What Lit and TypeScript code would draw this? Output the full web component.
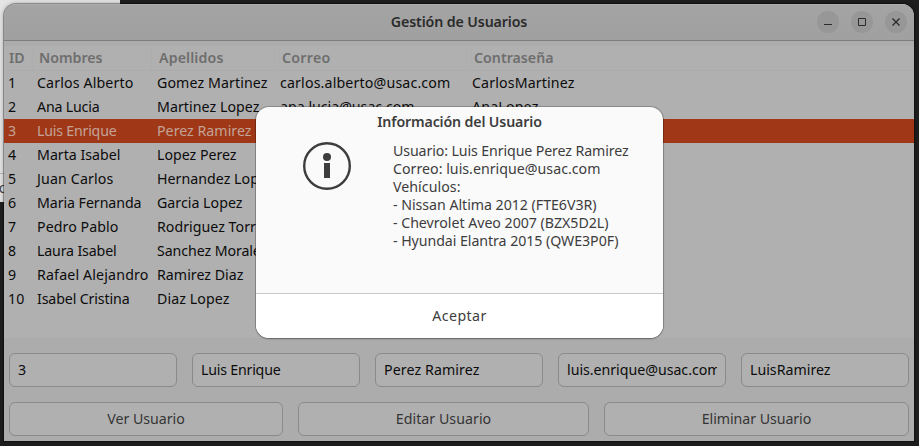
import { LitElement, html, css, svg } from "lit";
import { customElement, property } from "lit/decorators.js";

type Cell = [text: string, width: number];

/** A single line of text whose tracking is adjusted so that it fills a set width. */
@customElement("fit-text")
class FitText extends LitElement {
  @property() text = "";
  @property({ type: Number }) width = 0;

  static styles = css`
    :host { display: inline-block; white-space: pre; flex: none; }
    .line { display: inline-block; white-space: pre; }
  `;

  updated() {
    const line = this.renderRoot.querySelector<HTMLElement>(".line")!;
    line.style.letterSpacing = "0px";
    const natural = line.getBoundingClientRect().width;
    const spacing = (this.width + 0.5 - natural) / this.text.length;
    line.style.letterSpacing = `${spacing.toFixed(3)}px`;
  }

  render() {
    return html`<span class="line">${this.text}</span>`;
  }
}

const fit = ([text, width]: Cell) => html`<fit-text .text=${text} .width=${width}></fit-text>`;

const HEADERS: Cell[] = [["ID", 15], ["Nombres", 63], ["Apellidos", 64], ["Correo", 48], ["Contraseña", 79]];

const ROWS: Cell[][] = [
  [["1", 8], ["Carlos Alberto", 96], ["Gomez Martinez", 110], ["carlos.alberto@usac.com", 170], ["CarlosMartinez", 102]],
  [["2", 8], ["Ana Lucia", 62], ["Martinez Lopez", 102], ["ana.lucia@usac.com", 134], ["AnaLopez", 66]],
  [["3", 8], ["Luis Enrique", 79], ["Perez Ramirez", 94]],
  [["4", 8], ["Marta Isabel", 83], ["Lopez Perez", 79]],
  [["5", 8], ["Juan Carlos", 76], ["Hernandez Lopez", 116]],
  [["6", 8], ["Maria Fernanda", 104], ["Garcia Lopez", 85]],
  [["7", 8], ["Pedro Pablo", 81], ["Rodriguez Torres", 113]],
  [["8", 8], ["Laura Isabel", 79], ["Sanchez Morales", 110]],
  [["9", 8], ["Rafael Alejandro", 111], ["Ramirez Diaz", 86]],
  [["10", 16], ["Isabel Cristina", 92], ["Diaz Lopez", 72]],
];

const FIELDS: Cell[] = [["3", 8], ["Luis Enrique", 79], ["Perez Ramirez", 95], ["luis.enrique@usac.com", 153], ["LuisRamirez", 80]];
const ACTIONS: Cell[] = [["Ver Usuario", 77], ["Editar Usuario", 95], ["Eliminar Usuario", 109]];
const DETAILS: Cell[] = [
  ["Usuario: Luis Enrique Perez Ramirez", 235],
  ["Correo: luis.enrique@usac.com", 207],
  ["Vehículos:", 67],
  ["- Nissan Altima 2012 (FTE6V3R)", 203],
  ["- Chevrolet Aveo 2007 (BZX5D2L)", 215],
  ["- Hyundai Elantra 2015 (QWE3P0F)", 225],
];

@customElement("app-root")
class AppRoot extends LitElement {
  static styles = css`
    :host {
      display: block; position: relative; box-sizing: border-box;
      width: 919px; height: 446px; padding: 4px 5px 5px 4px; overflow: hidden;
      background: #1e1e1e;
      font: 14.2px/24px "Noto Sans", "Open Sans", sans-serif;
      color: #0c0c0c;
    }
    * { box-sizing: border-box; }
    .behind {
      position: absolute; left: 0; top: 0; width: 120px; height: 202px;
      background: #e4e4e4; color: #444; overflow: hidden;
    }
    .behind-rule { margin-top: 173px; height: 1px; background: #b8b8b8; }
    .behind-text { margin-left: -5px; line-height: 28px; }
    .window {
      position: relative; width: 910px; height: 437px; overflow: hidden;
      display: flex; flex-direction: column;
      border-radius: 12px 12px 0 0; background: #acacac;
      box-shadow: 0 0 0 1px rgba(0, 0, 0, .3), 0 0 5px rgba(0, 0, 0, .35);
    }
    .titlebar {
      height: 37px; flex: none; display: grid; grid-template-columns: 1fr auto 1fr; align-items: center;
      background: linear-gradient(#a4a4a4, #a0a0a0); border-bottom: 1px solid #7e7e7e;
      box-shadow: inset 0 1px #adadad;
      font-weight: 600; color: #2b2b2b;
    }
    .title { grid-column: 2; }
    .controls { display: flex; justify-content: flex-end; gap: 12px; padding-right: 7px; }
    .control { width: 22px; height: 22px; border-radius: 50%; background: #979797; display: block; }
    .table { height: 297px; flex: none; background: #b0b0b0; border-top: 5px solid #acacac; }
    .row { display: grid; grid-template-columns: 28px 120px 123px 192px 1fr; height: 24px; }
    .cell { padding-left: 5px; overflow: hidden; white-space: nowrap; }
    .row .cell:first-child { padding-left: 4px; }
    .head { height: 25px; border-bottom: 1px solid #acacac; color: #6e6e6e; font-weight: 600; line-height: 24px; }
    .head .cell { padding-left: 7px; border-right: 1px solid #adadad; }
    .head .cell:first-child { padding-left: 5px; width: 29px; }
    .head .cell:last-child { border-right: 0; }
    .selected { background: #a03817; color: #c3a397; }
    .fields { display: grid; grid-template-columns: repeat(5, 168px); gap: 15px; padding: 15px 5px 0; }
    .actions { display: grid; grid-template-columns: 274px 291px 305px; gap: 15px; padding: 15px 5px 0; }
    .field, .action {
      height: 34px; border: 1px solid #8a8a8a; border-radius: 6px; background: #b0b0b0;
      font: inherit; line-height: 32px;
    }
    .field { padding: 0 8px; }
    .field-text { overflow: hidden; white-space: nowrap; height: 32px; }
    .action { padding: 0; color: #353535; text-align: center; }
    .dialog {
      position: absolute; left: 256px; top: 107px; width: 407px; height: 231px;
      display: flex; flex-direction: column; overflow: hidden;
      border-radius: 13px; background: #fafafa; color: #3d3d3d;
      box-shadow: 0 0 0 1px rgba(0, 0, 0, .2), 0 1px 2px rgba(0, 0, 0, .28);
    }
    .dialog-title { height: 30px; line-height: 30px; font-weight: 600; text-align: center; }
    .message { flex: 1; display: flex; padding-left: 47px; gap: 42px; }
    .info { width: 48px; height: 48px; margin-top: 5px; flex: none; }
    .details { padding-top: 5px; line-height: 18px; }
    .detail { height: 18px; white-space: nowrap; }
    .accept {
      height: 45px; border: 0; border-top: 1px solid #c8c8c8; background: #fff; padding: 0;
      font: inherit; color: #3d3d3d; line-height: 44px;
    }
  `;

  render() {
    const glyphs = [
      svg`<path d="M7 13.5h8"/>`,
      svg`<path d="M7.5 7.5h7v7h-7z"/>`,
      svg`<path d="M7.5 7.5l7 7M14.5 7.5l-7 7" stroke-width="1.4"/>`,
    ];
    return html`
      <div class="behind"><div class="behind-rule"></div><div class="behind-text">lo</div></div>
      <div class="window">
        <div class="titlebar">
          <div class="title">${fit(["Gestión de Usuarios", 136])}</div>
          <div class="controls">
            ${glyphs.map((g) => html`<svg class="control" viewBox="0 0 22 22" fill="none" stroke="#2c2c2c">${g}</svg>`)}
          </div>
        </div>
        <div class="table">
          <div class="row head">${HEADERS.map((h) => html`<div class="cell">${fit(h)}</div>`)}</div>
          ${ROWS.map((r, i) => html`
            <div class="row ${i === 2 ? "selected" : ""}">${r.map((c) => html`<div class="cell">${fit(c)}</div>`)}</div>`)}
        </div>
        <div class="fields">
          ${FIELDS.map((f) => html`<div class="field"><div class="field-text">${fit(f)}</div></div>`)}
        </div>
        <div class="actions">${ACTIONS.map((a) => html`<button class="action">${fit(a)}</button>`)}</div>
      </div>
      <div class="dialog">
        <div class="dialog-title">${fit(["Información del Usuario", 164])}</div>
        <div class="message">
          <svg class="info" viewBox="0 0 48 48">
            <circle cx="24" cy="24" r="22.8" fill="none" stroke="#3d3d3d" stroke-width="2.4"/>
            <circle cx="24" cy="15" r="4" fill="#3d3d3d"/>
            <path d="M21 21h6v15h-6z" fill="#3d3d3d"/>
          </svg>
          <div class="details">${DETAILS.map((d) => html`<div class="detail">${fit(d)}</div>`)}</div>
        </div>
        <button class="accept">${fit(["Aceptar", 54])}</button>
      </div>
    `;
  }
}
